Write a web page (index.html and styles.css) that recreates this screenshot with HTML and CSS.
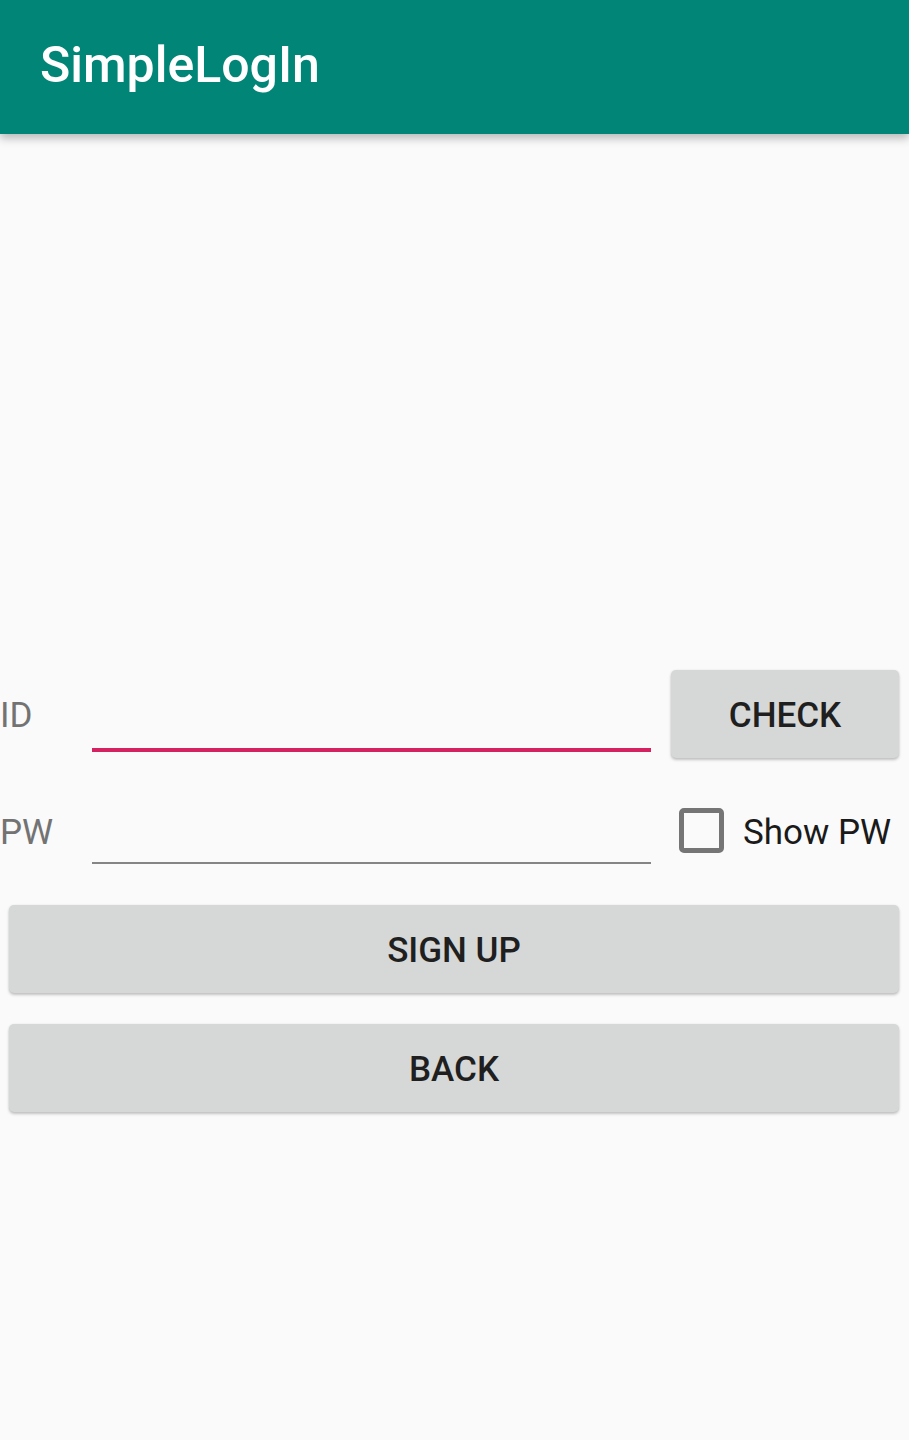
FILE: index.html
```html
<!DOCTYPE html>
<html lang="en">
<head>
<meta charset="utf-8">
<title>SimpleLogIn</title>
<link rel="stylesheet" href="styles.css">
</head>
<body>
<header class="appbar">
  <h1 class="appbar-title">SimpleLogIn</h1>
</header>
<main class="content">
  <div class="row row-id">
    <span class="label">ID</span>
    <div class="field field-focused"></div>
    <button class="btn btn-check">CHECK</button>
  </div>
  <div class="row row-pw">
    <span class="label">PW</span>
    <div class="field"></div>
    <label class="check">
      <span class="check-box"></span>
      <span class="check-text">Show PW</span>
    </label>
  </div>
  <button class="btn btn-wide btn-signup">SIGN UP</button>
  <button class="btn btn-wide btn-back">BACK</button>
</main>
</body>
</html>
```

FILE: styles.css
```css
html, body {
  margin: 0;
  padding: 0;
}

body {
  background: #fafafa;
  font-family: Roboto, "Noto Sans", "Liberation Sans", sans-serif;
  width: 909px;
  height: 1440px;
  overflow: hidden;
}

.appbar {
  height: 134px;
  background: #008577;
  display: flex;
  align-items: center;
  padding: 0 0 3px 40px;
  box-sizing: border-box;
  box-shadow: 0 4px 9px rgba(0, 0, 0, 0.28);
  position: relative;
  z-index: 1;
}

.appbar-title {
  margin: 0;
  font-size: 50px;
  font-weight: 500;
  color: #ffffff;
  line-height: 59px;
}

.content {
  display: flex;
  flex-direction: column;
  padding-top: 536px;
}

.row {
  display: flex;
  align-items: center;
}

.row-id {
  height: 88px;
}

.row-pw {
  height: 72px;
  margin-top: 38px;
}

.label {
  width: 92px;
  font-size: 35px;
  line-height: 41px;
  color: #737373;
  flex: none;
}

.row-id .label {
  margin-top: 2px;
}

.row-pw .label {
  margin-top: 1px;
}

.field {
  width: 559px;
  flex: none;
  align-self: flex-start;
  box-sizing: border-box;
  height: 68px;
  border-bottom: 2px solid #858585;
}

.field-focused {
  height: 82px;
  border-bottom: 4px solid #d3225f;
}

.btn {
  border: none;
  background: #d6d7d7;
  border-radius: 5px;
  box-shadow: 0 2px 3px rgba(0, 0, 0, 0.22), 0 0 2px rgba(0, 0, 0, 0.08);
  font-family: Roboto, "Noto Sans", "Liberation Sans", sans-serif;
  font-size: 35px;
  font-weight: 500;
  color: #1f1f1f;
  padding: 0;
  line-height: 41px;
}

.btn-check {
  width: 228px;
  height: 88px;
  margin-left: 20px;
  flex: none;
  padding-top: 3px;
}

.check {
  display: flex;
  align-items: center;
  margin-left: 28px;
}

.check-box {
  width: 45px;
  height: 45px;
  box-sizing: border-box;
  border: 5.5px solid #757575;
  border-radius: 5px;
  margin-top: -3px;
}

.check-text {
  margin-left: 19px;
  font-size: 35px;
  line-height: 41px;
  color: #1a1a1a;
  margin-top: 1px;
}

.btn-wide {
  width: 890px;
  height: 88px;
  margin-left: 9px;
  padding-top: 3px;
}

.btn-signup {
  margin-top: 37px;
}

.btn-back {
  margin-top: 31px;
}
```
